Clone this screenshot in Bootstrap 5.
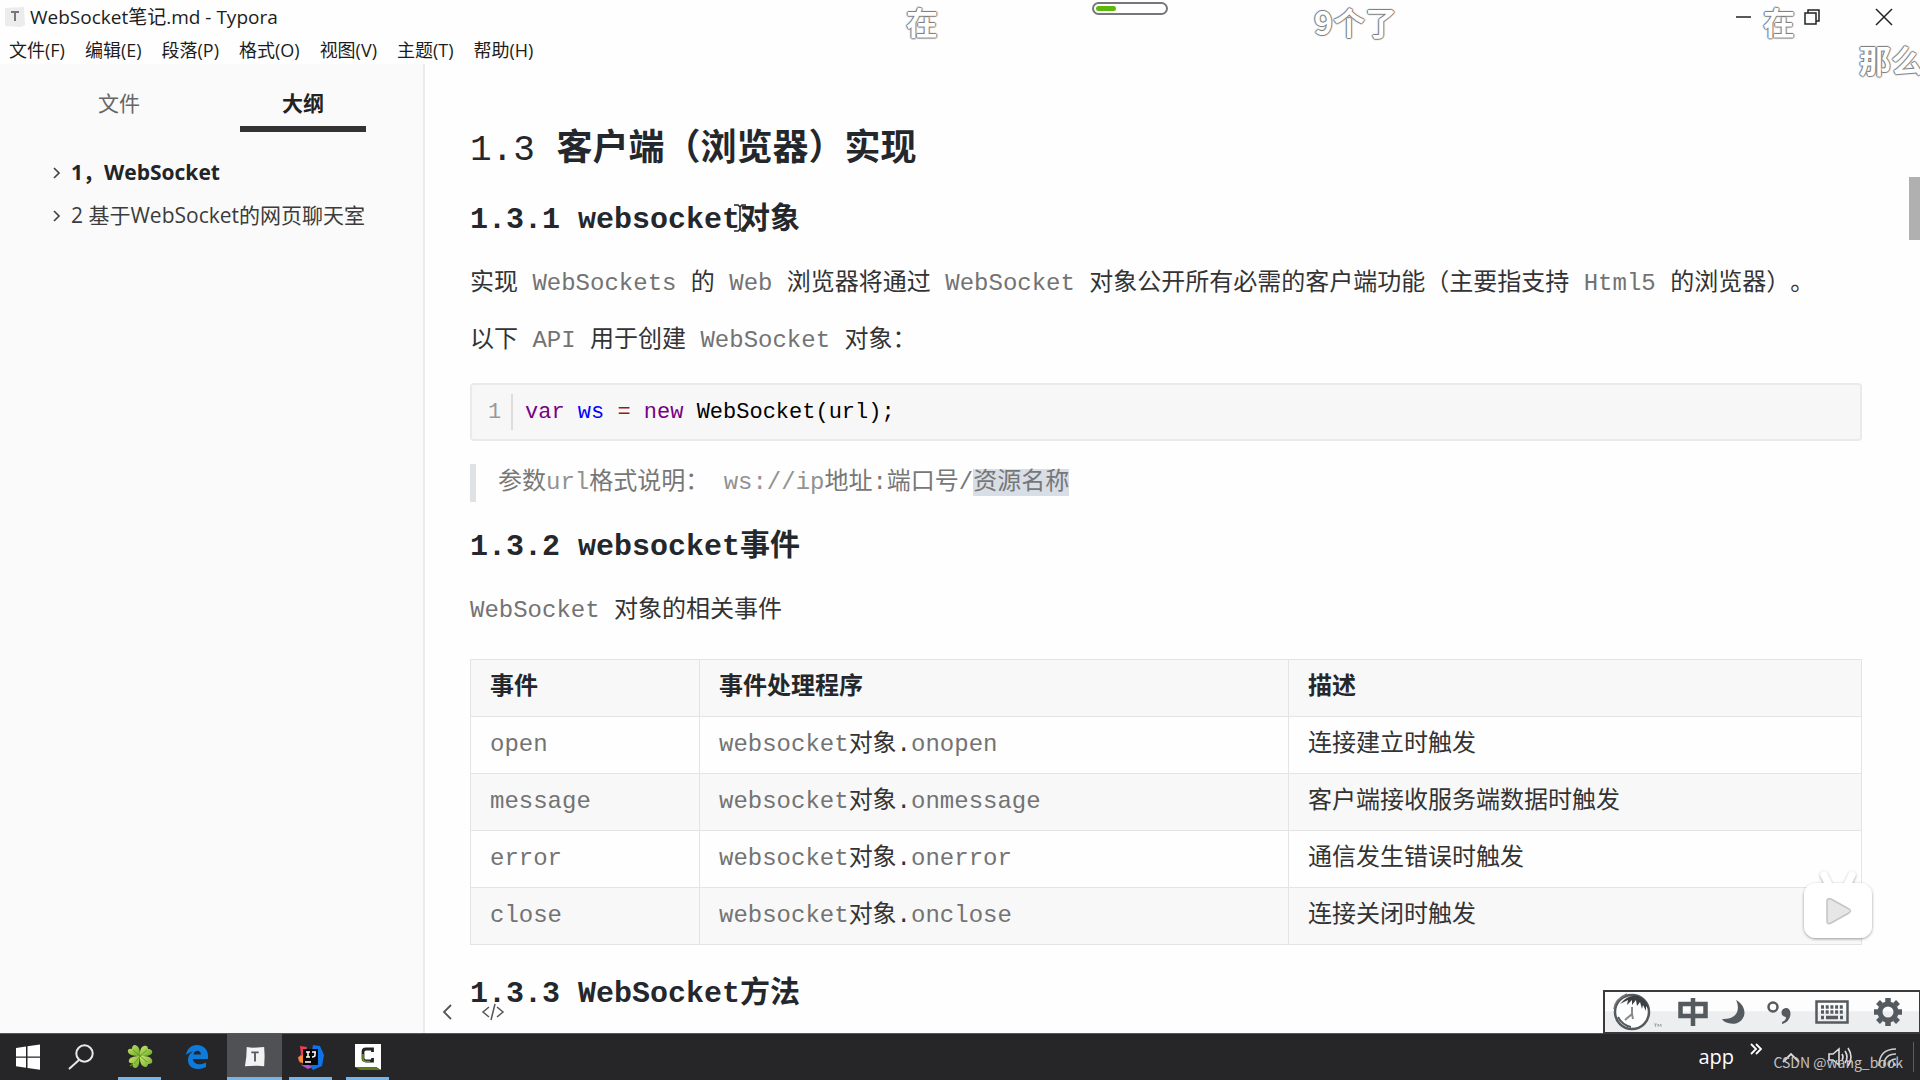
<!DOCTYPE html>
<html lang="zh-CN">
<head>
<meta charset="utf-8">
<meta name="viewport" content="width=device-width, initial-scale=1">
<title>WebSocket笔记.md - Typora</title>
<link href="https://cdn.jsdelivr.net/npm/bootstrap@5.3.0/dist/css/bootstrap.min.css" rel="stylesheet">
<style>
  :root { --ui: "Open Sans", "Noto Sans CJK SC", sans-serif; --doc: "Liberation Mono", "Noto Sans CJK SC", monospace; }
  body { font-family: var(--ui); color: #1c1c1c; background: #fefefe; text-spacing-trim: space-all; }
  a { color: inherit; text-decoration: none; }
  button { border: 0; background: none; padding: 0; color: inherit; }
  svg { display: block; overflow: visible; }

  .titlebar { height: 34px; padding-left: 4px; font-size: 19px; line-height: 34px; }
  .winctl { width: 72px; height: 34px; }
  .menubar { height: 30px; padding: 0 9px; gap: 20px; font-size: 18px; line-height: 32px; }
  .workarea { min-height: 0; }

  .sidepane { width: 425px; background: #fafafa; border-right: 2px solid #ececec; }
  .sidetabs { padding: 20px 56px 0; gap: 58px; font-size: 21px; }
  .sidetabs button { width: 126px; height: 48px; line-height: 38px; padding-bottom: 4px; color: #666; border-bottom: 6px solid transparent; }
  .sidetabs button.current { color: #222; font-weight: 700; border-color: #333; }
  .outline { padding: 19px 0 0 52px; font-size: 21px; line-height: 43px; color: #3c3c3c; }
  .outline svg { width: 9px; margin-right: 10px; }

  .paper { padding: 65px 58px 0 45px; min-width: 0; font-family: var(--doc); font-size: 24px; line-height: 38px; color: #333; }
  .paper h2, .paper h3 { font-weight: 700; color: #24272b; }
  .paper h2 { font-size: 36px; line-height: 44px; margin: 0 0 29px; }
  .paper h3 { font-size: 30px; line-height: 36px; margin: 27px 0; }
  .paper p { margin: 0 0 19px; }
  .en { color: #737373; }
  .codebox { background: #f7f7f7; border: 2px solid #e9eaed; border-radius: 4px; height: 58px; margin: 23px 0; padding-left: 12px; font-size: 22px; color: #000; }
  .codebox code { font: inherit; color: inherit; padding-top: 2px; }
  .lineno { width: 29px; height: 36px; line-height: 38px; padding-left: 4px; margin-right: 12px; color: #999; border-right: 2px solid #ddd; }
  .kw { color: #770088; } .df { color: #0000ff; } .op { color: #981a1a; }
  .quote { border-left: 6px solid #dfe2e5; padding-left: 22px; color: #777; }
  .quote .en { color: #929292; }
  .picked { background: #d7dee6; display: inline-block; line-height: 27px; }
  .doctable { margin: 29px 0 31px; border-color: #e3e4e6; table-layout: fixed; color: #333; --bs-table-bg: transparent; }
  .doctable th, .doctable td { padding: 9px 19px; border: 1px solid #e3e4e6; color: #333; }
  .doctable th { color: #24272b; }
  .doctable thead tr, .doctable tbody tr:nth-child(even) { background: #f8f8f8; }
  .c1 { width: 229px; } .c2 { width: 589px; }

  .thumb { right: 0; top: 113px; width: 11px; height: 63px; background: #b0b0b0; }
  .docfoot { left: 442px; bottom: 13px; gap: 28px; color: #555; }

  .taskbar { height: 47px; background: #262628; border-top: 1px solid #55585a; color: #fff; }
  .tile { height: 46px; width: 57px; }
  .tile.narrow { width: 50px; }
  .tile span { position: absolute; bottom: 0; left: 7px; right: 7px; height: 3px; background: #76b5ea; }
  .tile.active { background: #505154; width: 55px; margin-left: 2px; }
  .tile.active span { left: 0; right: 0; }
  .tray { font-size: 20px; padding-right: 6px; }
  .ime { right: 0; bottom: 46px; width: 317px; height: 44px; border: 2px solid #3a3a3a; border-right-width: 1px; background: linear-gradient(#fdfdfd 48%, #eceef0 49%); color: #555a5e; padding: 0 16px 0 7px; }
  .csdn { right: 17px; bottom: 6px; font: 14px/24px "Noto Sans CJK SC", sans-serif; color: #c2c2c2; }

  .danmaku { font: 700 32px/34px "Noto Sans CJK SC", sans-serif; color: #fff; white-space: nowrap;
    text-shadow: 1px 0 1px #777, -1px 0 1px #777, 0 1px 1px #777, 0 -1px 1px #777; }
  .d1 { left: 906px; top: 4px; } .d2 { left: 1314px; top: 4px; } .d3 { left: 1763px; top: 4px; } .d4 { left: 1859px; top: 42px; }
  .gauge { left: 1092px; top: 2px; width: 76px; height: 13px; border: 2px solid #77777b; border-radius: 7px; background: #fff; padding: 2px; }
  .gauge div { width: 30%; height: 5px; border-radius: 3px; background: #5cb80a; }
  .bili { right: 44px; bottom: 139px; }
  .ibeam { left: 733px; top: 204px; }
</style>
<script src="https://cdn.jsdelivr.net/npm/bootstrap@5.3.0/dist/js/bootstrap.bundle.min.js"></script>
</head>
<body class="vh-100 d-flex flex-column overflow-hidden position-relative">

<header>
  <div class="titlebar d-flex align-items-center">
    <svg width="22" height="22" viewBox="0 0 22 22"><path d="M1 2l19-1 1 18-4 2-16-1z" fill="#ececec"/><path d="M7 6h8M11 6v9" stroke="#777" stroke-width="2" fill="none"/></svg>
    <div class="ms-1">WebSocket笔记.md - Typora</div>
    <div class="ms-auto d-flex">
      <button class="winctl d-flex align-items-center justify-content-center" aria-label="最小化"><svg width="16" height="16" viewBox="-4 0 16 16"><path d="M0 8h15" stroke="#222" stroke-width="1.5"/></svg></button>
      <button class="winctl d-flex align-items-center justify-content-center" aria-label="还原"><svg width="16" height="16" viewBox="0 0 16 16" fill="none" stroke="#222" stroke-width="1.5"><path d="M1 4h11v11H1zM4 4V1h11v11h-3"/></svg></button>
      <button class="winctl d-flex align-items-center justify-content-center" aria-label="关闭"><svg width="16" height="16" viewBox="0 0 16 16" stroke="#222" stroke-width="1.5"><path d="M0 0l16 16M16 0L0 16"/></svg></button>
    </div>
  </div>
  <nav class="menubar d-flex">
    <a href="#">文件(F)</a><a href="#">编辑(E)</a><a href="#">段落(P)</a><a href="#">格式(O)</a><a href="#">视图(V)</a><a href="#">主题(T)</a><a href="#">帮助(H)</a>
  </nav>
</header>

<div class="workarea flex-fill d-flex position-relative overflow-hidden">
  <aside class="sidepane flex-shrink-0">
    <div class="sidetabs d-flex">
      <button>文件</button><button class="current">大纲</button>
    </div>
    <nav class="outline">
      <a href="#" class="d-flex align-items-center fw-bold text-dark"><svg height="12" viewBox="0 0 9 12" fill="none" stroke="#444" stroke-width="1.7"><path d="M2 1l5 5-5 5"/></svg>1，WebSocket</a>
      <a href="#" class="d-flex align-items-center"><svg height="12" viewBox="0 0 9 12" fill="none" stroke="#444" stroke-width="1.7"><path d="M2 1l5 5-5 5"/></svg>2 基于WebSocket的网页聊天室</a>
    </nav>
  </aside>

  <main class="paper flex-fill">
    <h2><span class="fw-normal">1.3</span> 客户端（浏览器）实现</h2>
    <h3>1.3.1 websocket对象</h3>
    <p>实现 <span class="en">WebSockets</span> 的 <span class="en">Web</span> 浏览器将通过 <span class="en">WebSocket</span> 对象公开所有必需的客户端功能（主要指支持 <span class="en">Html5</span> 的浏览器）。</p>
    <p>以下 <span class="en">API</span> 用于创建 <span class="en">WebSocket</span> 对象：</p>
    <div class="codebox d-flex align-items-center"><div class="lineno">1</div><code><span class="kw">var</span> <span class="df">ws</span> <span class="op">=</span> <span class="kw">new</span> WebSocket(url);</code></div>
    <blockquote class="quote">参数<span class="en">url</span>格式说明： <span class="en">ws://ip</span>地址:端口号/<span class="picked">资源名称</span></blockquote>
    <h3>1.3.2 websocket事件</h3>
    <p><span class="en">WebSocket</span> 对象的相关事件</p>
    <table class="table doctable">
      <colgroup><col class="c1"><col class="c2"><col></colgroup>
      <thead><tr><th>事件</th><th>事件处理程序</th><th>描述</th></tr></thead>
      <tbody>
        <tr><td><span class="en">open</span></td><td><span class="en">websocket</span>对象.<span class="en">onopen</span></td><td>连接建立时触发</td></tr>
        <tr><td><span class="en">message</span></td><td><span class="en">websocket</span>对象.<span class="en">onmessage</span></td><td>客户端接收服务端数据时触发</td></tr>
        <tr><td><span class="en">error</span></td><td><span class="en">websocket</span>对象.<span class="en">onerror</span></td><td>通信发生错误时触发</td></tr>
        <tr><td><span class="en">close</span></td><td><span class="en">websocket</span>对象.<span class="en">onclose</span></td><td>连接关闭时触发</td></tr>
      </tbody>
    </table>
    <h3>1.3.3 WebSocket方法</h3>
  </main>

  <div class="thumb position-absolute"></div>
  <div class="docfoot position-absolute d-flex align-items-center">
    <button aria-label="收起侧栏"><svg width="11" height="16" viewBox="0 0 11 16" fill="none" stroke="currentColor" stroke-width="1.8"><path d="M9 1L2 8l7 7"/></svg></button>
    <button aria-label="源代码模式"><svg width="24" height="16" viewBox="0 0 24 16" fill="none" stroke="currentColor" stroke-width="1.5"><path d="M8 3L2 8l6 5M16 3l6 5-6 5M14 0l-4 16"/></svg></button>
  </div>
</div>

<footer class="taskbar flex-shrink-0 d-flex align-items-center">
  <button class="tile position-relative d-flex align-items-center justify-content-center" aria-label="开始"><svg width="26" height="26" viewBox="1 0 26 26" fill="#fff"><path d="M1 4l10-1.500v10H1zM12.500 2.300L25 .5v12H12.500zM1 13.700h10v10L1 22.200zM12.500 13.700H25v12l-12.500-1.800z"/></svg></button>
  <button class="tile narrow position-relative d-flex align-items-center justify-content-center" aria-label="搜索"><svg width="26" height="26" viewBox="1 0 26 26" fill="none" stroke="#e8e8e8" stroke-width="2"><circle cx="16.500" cy="9.500" r="8.200"/><path d="M11 16L1 25"/></svg></button>
  <button class="tile position-relative d-flex align-items-center justify-content-center ms-1" aria-label="四叶草"><svg width="26" height="26" viewBox="0 0 26 26"><defs><linearGradient id="lf" x1="0" y1="0" x2="1" y2="1"><stop offset="0" stop-color="#cbe668"/><stop offset="1" stop-color="#6aa92c"/></linearGradient></defs><path d="M13 12q-3 6-10 10" stroke="#4b8416" stroke-width="1.500" fill="none"/><g fill="url(#lf)"><path d="M13 12C10 12 2 12 1 8c-1-3 2-4 4-3 0-4 3-5 5-3 3 2 3 6 3 10z"/><path d="M13 12c0-4 0-9 4-10 3-1 4 1 4 3 3 0 5 2 4 4-1 3-7 3-12 3z"/><path d="M13 12c5 0 11 0 12 4 1 3-1 4-4 4 0 3-3 4-5 2-3-2-3-6-3-10z"/><path d="M13 12c-1 4 0 11-4 12-3 0-4-2-3-5-3 1-5-1-4-3 1-3 6-4 11-4z"/></g><path d="M13 12L6 6M13 12l7-6M13 12l7 6M13 12l-6 8" stroke="#5b9a20" stroke-width=".9"/></svg><span></span></button>
  <button class="tile position-relative d-flex align-items-center justify-content-center" aria-label="Edge"><svg width="22" height="24" viewBox="0 0 22 24"><path d="M0 10C1 3 6 0 11 0c7 0 11 5 11 11v3H7c0 5 7 7 13 3.500v4.500c-8 4-18 2-18-7 0-4 2-7 5-8.500C4 7 1.500 8.500 0 10zM7.500 9.500H15c0-5-7-5-7.500 0z" fill="#0d7bdc"/></svg></button>
  <button class="tile active position-relative d-flex align-items-center justify-content-center" aria-label="Typora"><svg width="22" height="22" viewBox="0 0 24 24"><path d="M3 1l6 1 13-1 .5 10-.5 11-7-.5L1 22l1.500-10z" fill="#f2f2f3"/><path d="M8 7h8M12 7v10" stroke="#55585e" stroke-width="2" fill="none"/></svg><span></span></button>
  <button class="tile position-relative d-flex align-items-center justify-content-center" aria-label="IntelliJ IDEA"><svg width="26" height="26" viewBox="0 0 26 26"><path d="M2 2l7 1-2 10-5 6-2-4 3-5z" fill="#ee3d5c"/><path d="M0 13l6-2v9l-4-2z" fill="#f98b2c"/><path d="M15 1l7 1 4 9-2 11-9 4-4-5z" fill="#0f72e6"/><path d="M3 21l6-1 5 3-4 2z" fill="#b84fd0"/><path d="M5 5h15v16H5z" fill="#08080a"/><path d="M8 8h4M10 8v5M8 13h4M14 8h4M17 8v3q0 2-3 2M7 18h6" stroke="#fff" stroke-width="1.5" fill="none"/></svg><span></span></button>
  <button class="tile position-relative d-flex align-items-center justify-content-center" aria-label="Camtasia"><svg width="26" height="26" viewBox="0 0 26 26"><path d="M0 0h26v26l-5-3H0z" fill="#fff"/><path d="M17.500 8V5H11Q8 5 8 8v6q0 3 3 3h6.500v-3" fill="none" stroke="#202422" stroke-width="2.800"/><path d="M8 10v5q0 2.500 3 2.500h4" fill="none" stroke="#6c9a1d" stroke-width="1.500"/><path d="M0 23h21l5 3H5z" fill="#5c7c1b"/></svg><span></span></button>

  <div class="tray ms-auto d-flex align-items-center">
    <a href="#" class="me-3">app</a>
    <svg class="mb-3 me-3" width="12" height="11" viewBox="0 0 12 11" fill="none" stroke="#fff" stroke-width="1.800"><path d="M1 0l5 5-5 5M6 0l5 5-5 5"/></svg>
    <svg class="ms-1 me-4" width="18" height="11" viewBox="0 0 18 11" fill="none" stroke="#ddd" stroke-width="1.800"><path d="M1 10l8-8 8 8"/></svg>
    <svg class="ms-1 me-4" width="25" height="20" viewBox="0 0 25 20" fill="none" stroke="#ddd" stroke-width="1.600"><path d="M1 7h4l6-5v16l-6-5H1zM14 7q2 3 0 6M17 4q4 6 0 12M20 1q6 9 0 18"/></svg>
    <svg class="me-3" width="20" height="20" viewBox="0 0 20 20" fill="none" stroke="#ccc" stroke-width="1.700"><path d="M2 19Q2 2 19 2M7 19Q7 7 19 7M12 19q0-7 7-7"/><circle cx="17.500" cy="17.500" r="1.500" fill="#ccc" stroke="none"/></svg>
    <div class="vr"></div>
  </div>
</footer>

<div class="ime position-absolute d-flex align-items-center justify-content-between">
  <svg width="46" height="40" viewBox="0 0 46 40"><circle cx="20" cy="20" r="17" fill="#fff" stroke="#555a5e" stroke-width="2.500"/><path d="M8 12Q16 2 26 4q9 3 11 14l-3-4v5l-3-6-1 4-2-7-3 4-1-6-4 5v-5l-5 5 1-5z" fill="#3c4043"/><path d="M2 17Q3 7 15 2" stroke="#777" stroke-width="1.500" fill="none"/><path d="M6 25q4 8 13 10" stroke="#555a5e" stroke-width="2" fill="none"/><path d="M20 15v7l-7 6M20 22l1 5" fill="none" stroke="#8a8a8a" stroke-width="2"/><path d="M42 32h3M43.500 32v3M46 35v-3l1.500 2 1.500-2v3" stroke="#999" stroke-width=".8" fill="none"/></svg>
  <svg width="30" height="30" viewBox="0 0 30 30" fill="none" stroke="currentColor" stroke-width="4.500"><path d="M2.500 7h25v12h-25zM15 1v28"/></svg>
  <svg width="24" height="26" viewBox="6 0 24 26" fill="currentColor"><path d="M14 1c16 9 7 28-8 23-3-1-5-2-6-4 14 1 19-9 14-19z"/></svg>
  <svg width="26" height="26" viewBox="7 0 26 26"><circle cx="7" cy="8" r="4.500" fill="none" stroke="currentColor" stroke-width="2.500"/><path d="M20 9c7 0 6 14-4 16v-2c3-1 4-3 4-5-6 0-6-9 0-9z" fill="currentColor"/></svg>
  <svg width="34" height="24" viewBox="4 0 34 24"><path d="M1.500 1.500h31v21h-31z" fill="none" stroke="currentColor" stroke-width="2.500"/><path d="M6 7h22M6 12h22" stroke="currentColor" stroke-width="3.500" stroke-dasharray="3 1.700"/><path d="M6 17.500h3M11 17.500h12M25 17.500h3" stroke="currentColor" stroke-width="3.500"/></svg>
  <svg width="30" height="30" viewBox="-15 -15 30 30"><circle r="8" fill="none" stroke="currentColor" stroke-width="5"/><path d="M0-14V-9M0 14V9M-14 0H-9M14 0H9M-10-10l3 3M10 10l-3-3M10-10l-3 3M-10 10l3-3" stroke="currentColor" stroke-width="5.500"/></svg>
</div>

<svg class="bili position-absolute" width="76" height="72" viewBox="0 0 76 72"><defs><filter id="sh" x="-20%" y="-20%" width="140%" height="140%"><feDropShadow dx="0" dy="1" stdDeviation="1.500" flood-opacity=".4"/></filter></defs><g filter="url(#sh)"><path d="M24 6l6 12M52 6l-6 12" stroke="#fff" stroke-width="7" stroke-linecap="round"/><rect x="4" y="14" width="68" height="55" rx="12" fill="#fff"/></g><path d="M27 32q0-3 4-2l18 10q3 2 0 4L31 54q-4 2-4-2z" fill="#e6e6e6" stroke="#c4c4c4" stroke-width="1.500"/></svg>
<svg class="ibeam position-absolute" width="14" height="28" viewBox="0 0 14 28" fill="none" stroke="#222" stroke-width="1.500"><path d="M1 1h4l2 2 2-2h4M7 3v22M1 27h4l2-2 2 2h4"/></svg>
<div class="gauge position-absolute"><div></div></div>
<div class="danmaku d1 position-absolute">在</div>
<div class="danmaku d2 position-absolute">9个了</div>
<div class="danmaku d3 position-absolute">在</div>
<div class="danmaku d4 position-absolute">那么</div>
<div class="csdn position-absolute">CSDN @wang_book</div>
</body>
</html>
